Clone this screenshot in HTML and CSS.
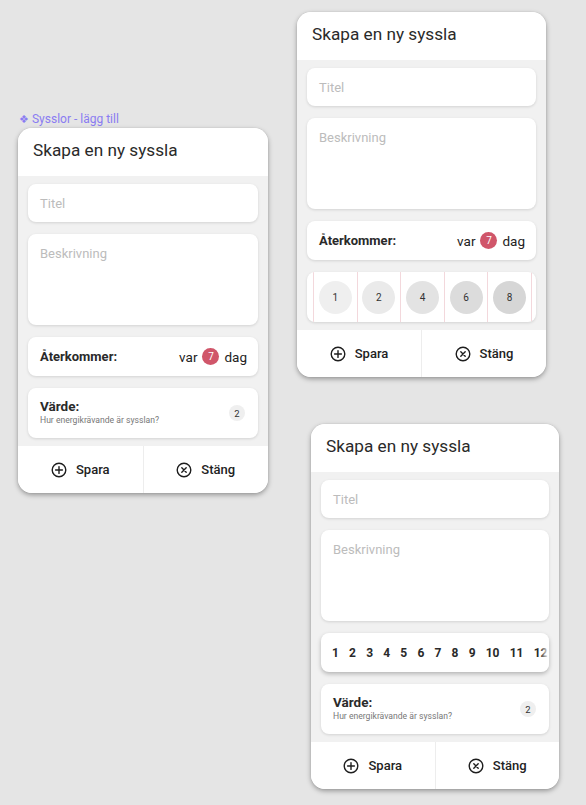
FILE: index.html
```html
<!DOCTYPE html>
<html lang="sv">
<head>
<meta charset="utf-8">
<link rel="stylesheet" href="styles.css">
</head>
<body>
<div class="canvas">

  <div class="frame-label"><span class="comp-icon">❖</span> Sysslor - lägg till</div>

  <!-- Left card -->
  <div class="card card-left">
    <div class="card-head">Skapa en ny syssla</div>
    <div class="card-body">
      <div class="field field-title">Titel</div>
      <div class="field field-desc">Beskrivning</div>
      <div class="field field-row">
        <span class="row-label">Återkommer:</span>
        <span class="interval">var <span class="badge-red">7</span> dag</span>
      </div>
      <div class="field field-value">
        <div class="value-text">
          <span class="row-label">Värde:</span>
          <span class="value-sub">Hur energikrävande är sysslan?</span>
        </div>
        <span class="badge-gray">2</span>
      </div>
    </div>
    <div class="card-foot">
      <div class="btn">
        <svg class="ico" viewBox="0 0 16 16"><circle cx="8" cy="8" r="6.8"/><path d="M8 4.6v6.8M4.6 8h6.8"/></svg>
        <span>Spara</span>
      </div>
      <div class="btn">
        <svg class="ico" viewBox="0 0 16 16"><circle cx="8" cy="8" r="6.8"/><path d="M5.8 5.8l4.4 4.4M10.2 5.8l-4.4 4.4"/></svg>
        <span>Stäng</span>
      </div>
    </div>
  </div>

  <!-- Top right card -->
  <div class="card card-tr">
    <div class="card-head">Skapa en ny syssla</div>
    <div class="card-body">
      <div class="field field-title">Titel</div>
      <div class="field field-desc">Beskrivning</div>
      <div class="field field-row">
        <span class="row-label">Återkommer:</span>
        <span class="interval">var <span class="badge-red">7</span> dag</span>
      </div>
      <div class="field field-circles">
        <div class="cells">
          <div class="cell"><span class="dot d1">1</span></div>
          <div class="cell"><span class="dot d2">2</span></div>
          <div class="cell"><span class="dot d3">4</span></div>
          <div class="cell"><span class="dot d4">6</span></div>
          <div class="cell"><span class="dot d5">8</span></div>
          <div class="cell"></div>
        </div>
      </div>
    </div>
    <div class="card-foot">
      <div class="btn">
        <svg class="ico" viewBox="0 0 16 16"><circle cx="8" cy="8" r="6.8"/><path d="M8 4.6v6.8M4.6 8h6.8"/></svg>
        <span>Spara</span>
      </div>
      <div class="btn">
        <svg class="ico" viewBox="0 0 16 16"><circle cx="8" cy="8" r="6.8"/><path d="M5.8 5.8l4.4 4.4M10.2 5.8l-4.4 4.4"/></svg>
        <span>Stäng</span>
      </div>
    </div>
  </div>

  <!-- Bottom right card -->
  <div class="card card-br">
    <div class="card-head">Skapa en ny syssla</div>
    <div class="card-body">
      <div class="field field-title">Titel</div>
      <div class="field field-desc">Beskrivning</div>
      <div class="field field-numbers">
        <div class="nums">
          <span>1</span><span>2</span><span>3</span><span>4</span><span>5</span><span>6</span><span>7</span><span>8</span><span>9</span><span>10</span><span>11</span><span>12</span>
        </div>
      </div>
      <div class="field field-value">
        <div class="value-text">
          <span class="row-label">Värde:</span>
          <span class="value-sub">Hur energikrävande är sysslan?</span>
        </div>
        <span class="badge-gray">2</span>
      </div>
    </div>
    <div class="card-foot">
      <div class="btn">
        <svg class="ico" viewBox="0 0 16 16"><circle cx="8" cy="8" r="6.8"/><path d="M8 4.6v6.8M4.6 8h6.8"/></svg>
        <span>Spara</span>
      </div>
      <div class="btn">
        <svg class="ico" viewBox="0 0 16 16"><circle cx="8" cy="8" r="6.8"/><path d="M5.8 5.8l4.4 4.4M10.2 5.8l-4.4 4.4"/></svg>
        <span>Stäng</span>
      </div>
    </div>
  </div>

</div>
</body>
</html>
```
FILE: styles.css
```css
* { box-sizing: border-box; }

html, body {
  margin: 0;
  padding: 0;
  background: #e5e5e5;
  font-family: Roboto, "Noto Sans", Arial, sans-serif;
  color: #222;
}

.canvas {
  position: relative;
  width: 586px;
  height: 805px;
  overflow: hidden;
}

.frame-label {
  position: absolute;
  left: 19px;
  top: 112px;
  font-size: 12px;
  line-height: 15px;
  color: #8a7cf2;
}
.comp-icon { font-size: 11px; }

.card {
  position: absolute;
  width: 250px;
  background: #fff;
  border-radius: 14px;
  overflow: hidden;
  box-shadow: 0 2px 5px rgba(0, 0, 0, 0.35), 0 0 1px rgba(0,0,0,0.2);
}
.card-left { left: 18px; top: 128px; }
.card-tr { left: 297px; top: 12px; width: 249px; }
.card-br { left: 311px; top: 424px; width: 248px; }

.card-head {
  height: 48px;
  display: flex;
  align-items: center;
  padding: 0 0 4px 15px;
  font-size: 17.2px;
  color: #2a2a2a;
  background: #fff;
}

.card-body {
  background: #f1f1f1;
  padding: 8px 10px;
  display: flex;
  flex-direction: column;
  gap: 12px;
}

.field {
  background: #fff;
  border-radius: 8px;
  box-shadow: 0 1px 3px rgba(0, 0, 0, 0.13);
}

.field-title {
  height: 38px;
  display: flex;
  align-items: center;
  padding-left: 12px;
  font-size: 13px;
  color: #bcbcbc;
}

.field-desc {
  height: 91px;
  padding: 12px 12px 0;
  font-size: 13px;
  color: #bcbcbc;
}

.field-row {
  height: 39px;
  display: flex;
  align-items: center;
  justify-content: space-between;
  padding: 0 11px 0 12px;
}

.row-label {
  font-size: 13px;
  font-weight: 700;
  color: #2a2a2a;
}

.interval {
  display: flex;
  align-items: center;
  gap: 5px;
  font-size: 13.5px;
  color: #222;
}

.badge-red {
  width: 17px;
  height: 17px;
  border-radius: 50%;
  background: #d0566a;
  color: #fff;
  font-size: 10px;
  display: flex;
  align-items: center;
  justify-content: center;
}

.field-value {
  height: 50px;
  display: flex;
  align-items: center;
  justify-content: space-between;
  padding: 0 13px 0 12px;
}

.value-text {
  display: flex;
  flex-direction: column;
  line-height: 1;
  padding-bottom: 1px;
}
.value-text .row-label { font-size: 13.5px; }
.value-sub {
  font-size: 8.6px;
  color: #777;
  margin-top: 2px;
}

.badge-gray {
  width: 16px;
  height: 16px;
  border-radius: 50%;
  background: #efefef;
  color: #333;
  font-size: 9.5px;
  display: flex;
  align-items: center;
  justify-content: center;
}

.field-circles {
  height: 50px;
  overflow: hidden;
}
.cells {
  display: flex;
  height: 100%;
  padding-left: 6px;
}
.cell {
  flex: 0 0 43.6px;
  height: 100%;
  border-left: 1px solid #f3d8dc;
  display: flex;
  align-items: center;
  justify-content: center;
}
.dot {
  width: 33px;
  height: 33px;
  border-radius: 50%;
  display: flex;
  align-items: center;
  justify-content: center;
  font-size: 10px;
  color: #333;
}
.d1 { background: #efefef; }
.d2 { background: #eaeaea; }
.d3 { background: #e3e3e3; }
.d4 { background: #dcdcdc; }
.d5 { background: #d6d6d6; }

.field-numbers {
  height: 39px;
  position: relative;
  overflow: hidden;
  box-shadow: 0 2px 4px rgba(0, 0, 0, 0.25);
}
.nums {
  display: flex;
  align-items: center;
  height: 100%;
  gap: 10.2px;
  padding-left: 11px;
  font-size: 12px;
  font-weight: 700;
  color: #2a2a2a;
  white-space: nowrap;
}
.field-numbers::after {
  content: "";
  position: absolute;
  right: 0;
  top: 0;
  width: 9px;
  height: 100%;
  background: linear-gradient(to right, rgba(255,255,255,0), rgba(255,255,255,0.8) 80%);
}

.card-foot {
  height: 47px;
  display: flex;
  background: #fff;
}
.btn {
  flex: 1;
  display: flex;
  align-items: center;
  justify-content: center;
  gap: 9px;
  font-size: 13px;
  font-weight: 500;
  color: #222;
}
.btn + .btn { border-left: 1px solid #ededed; }

.ico {
  width: 16px;
  height: 16px;
  fill: none;
  stroke: #1e1e1e;
  stroke-width: 1.4;
  stroke-linecap: round;
}
```
